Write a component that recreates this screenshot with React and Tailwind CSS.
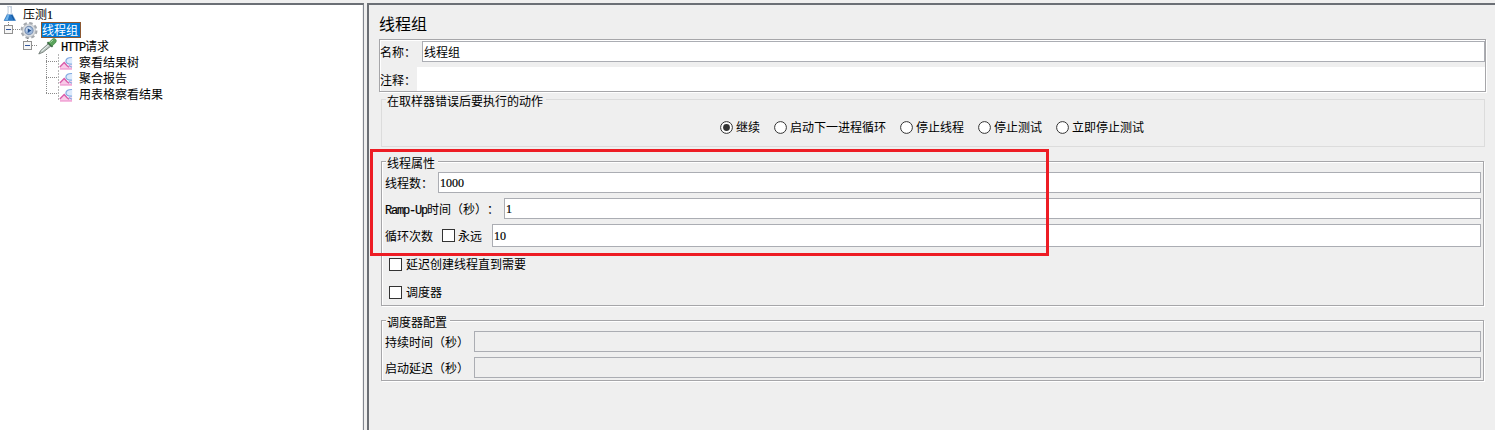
import React from "react";

const etched =
  "border border-[#a6a6a9] shadow-[1px_1px_0_#fff,inset_1px_1px_0_#fff]";

function Mono({ children }) {
  return (
    <span className="font-['Liberation_Mono',monospace] text-[12px] leading-none tracking-[-1.2px] [-webkit-text-stroke:0.2px]">
      {children}
    </span>
  );
}

function Digits({ children }) {
  return (
    <span className="font-['Liberation_Serif',serif] text-[12px] leading-none [-webkit-text-stroke:0.2px]">
      {children}
    </span>
  );
}

function Flask() {
  return (
    <svg width="14" height="16" viewBox="0 0 14 16" className="shrink-0">
      <path d="M4 .6h5M5 1v5.5L1 14.5h11.6L8.5 6.5V1z" fill="#e6edf5" stroke="#c3cedb" strokeWidth=".9" />
      <path d="M4 8.4h5.4l3.4 6.4H.8z" fill="#2b78c5" />
      <path d="M4.4 9h2L4.8 14H2z" fill="#70b3e8" />
      <path d="M8.6 9l2.4 5" stroke="#12539b" />
      <path d="M6.5 1v7" stroke="#fff" />
    </svg>
  );
}

function Gear() {
  return (
    <svg width="18" height="17" viewBox="0 0 18 17" className="shrink-0">
      <circle cx="9" cy="8.5" r="7.3" fill="none" stroke="#a4a8ad" strokeWidth="2.4" strokeDasharray="3.4 2.33" />
      <circle cx="9" cy="8.5" r="6.5" fill="#dcdfe2" stroke="#b5b9be" strokeWidth=".7" />
      <circle cx="9" cy="8.5" r="4.1" fill="#9db9de" stroke="#7d94b5" strokeWidth="1.1" />
      <circle cx="8.4" cy="7.6" r="2.4" fill="#d3e2f5" />
      <path d="M7.7 6.2l3.6 2.4-3.6 2.4z" fill="#1d4c8e" />
    </svg>
  );
}

function Pipette() {
  return (
    <svg width="19" height="17" viewBox="0 0 19 17" className="shrink-0">
      <path d="M.8 16L2.6 12.6l7.7-6.9 2.5 2.4-7.6 6z" fill="#b9c5bf" stroke="#6f7974" strokeWidth=".9" />
      <path d="M3.4 13.2L10.7 7" stroke="#eef6f3" />
      <path d="M9.4 4.2l5.2 4.6" stroke="#3b6a42" strokeWidth="2" />
      <path d="M10.8 4.9L14 1.4q2-1.6 3.8 0 1.2 1.6-.4 3.5L14 8z" fill="#5ba45c" stroke="#438746" strokeWidth=".7" />
      <path d="M12.5 4.4l2.7-2.6" stroke="#a9dcaa" />
    </svg>
  );
}

function Graph() {
  return (
    <svg width="14" height="14" viewBox="0 0 14 14" className="mt-[2px] shrink-0">
      <path d="M1 11L5 6.500l3 3.500 5-1v5H1z" fill="#f9cbe8" />
      <path d="M.8 10.900L5.200 6.500l2.900 3.200 1.900 1.500" fill="none" stroke="#d95aa9" strokeWidth="1.400" />
      <path d="M1 12.800h12" stroke="#ee9bd0" />
      <path d="M13.200 1v8C8.500 9 6.500 7.500 6.800 4.800 7.200 2 9.500 1 13.200 1z" fill="#dceafc" />
      <path d="M13 1.500C9.500 1.300 7 2.700 6.900 5c0 2.200 2.400 3.400 6 3.200" fill="none" stroke="#83a9e0" strokeWidth="1.200" />
      <path d="M9.800 9.500l3.200 1.700" stroke="#86a8de" strokeWidth="1.100" />
    </svg>
  );
}

const dots = { stroke: "#8a8a8a", strokeDasharray: "1 1", fill: "none" };

function Expander({ x, y }) {
  return (
    <g>
      <rect x={x + 0.5} y={y + 0.5} width="8" height="8" fill="#f6f6f6" stroke="#919191" />
      <path d={`M${x + 2} ${y + 4.5}h5`} stroke="#31569d" />
    </g>
  );
}

function LeafLines({ last }) {
  return (
    <svg width="59" height="16" className="shrink-0">
      <path d={last ? "M46.5 0v8" : "M46.5 0v16"} {...dots} />
      <path d="M46 7.5h11" {...dots} />
      <path d="M58.5 0v15" stroke="#b5b5b5" strokeDasharray="2 1" />
    </svg>
  );
}

function Tree() {
  return (
    <div className="h-full w-[362px] bg-white pt-px">
      <div className="flex h-4 items-center pl-[3px]">
        <Flask />
        <span className="ml-[6px]">压测<Digits>1</Digits></span>
      </div>
      <div className="flex h-4 items-center">
        <svg width="20" height="16" className="shrink-0">
          <path d="M8.5 0v3M13 7.5h7" {...dots} />
          <Expander x={4} y={3} />
        </svg>
        <Gear />
        <span className="relative ml-[3px] flex h-4 w-[40px] items-center bg-[#0078d7] pl-px text-white">
          线程组
          <svg width="40" height="16" className="absolute left-0 top-0">
            <rect x=".5" y=".5" width="39" height="15" fill="none" stroke="#1c2a3a" />
            <rect x=".5" y=".5" width="39" height="15" fill="none" stroke="#ff8728" strokeDasharray="1 1" />
          </svg>
        </span>
      </div>
      <div className="flex h-4 items-center">
        <svg width="38" height="16" className="shrink-0">
          <path d="M27.5 0v3M32 7.5h6" {...dots} />
          <Expander x={23} y={3} />
        </svg>
        <Pipette />
        <span className="ml-[4px]"><Mono>HTTP</Mono>请求</span>
      </div>
      {["察看结果树", "聚合报告", "用表格察看结果"].map((name, i) => (
        <div key={name} className="flex h-4 items-center">
          <LeafLines last={i === 2} />
          <Graph />
          <span className="ml-[6px]">{name}</span>
        </div>
      ))}
    </div>
  );
}

function Field({ children, disabled, tall }) {
  return (
    <div
      className={`flex flex-1 items-center border border-[#abadb3] pl-px ${tall ? "h-[23px]" : "h-[21px]"} ${disabled ? "bg-[#efefef]" : "bg-white"}`}
    >
      {children}
    </div>
  );
}

function Check() {
  return <span className="h-[13px] w-[13px] shrink-0 border border-[#333] bg-white" />;
}

function Caption({ children }) {
  return (
    <div className="absolute -top-[7px] left-[4px] h-4 bg-[#efefef] pl-px pr-[3px] leading-4">
      {children}
    </div>
  );
}

function Radio({ label, checked }) {
  return (
    <div className="flex items-center gap-[3px]">
      <svg width="13" height="13" className="shrink-0">
        <circle cx="6.5" cy="6.5" r="5.9" fill="#fff" stroke="#333" strokeWidth="1" />
        {checked && <circle cx="6.5" cy="6.5" r="3.4" fill="#333" />}
      </svg>
      <span className="-mt-px">{label}</span>
    </div>
  );
}

export default function App() {
  return (
    <div className="relative flex h-[430px] w-[1495px] flex-col overflow-hidden whitespace-nowrap bg-[#efefef] pt-[3px] font-['Noto_Sans_CJK_SC',sans-serif] text-[12px] leading-4 text-black [text-spacing-trim:space-all]">
      <div className="flex min-h-0 flex-1">
        <div className="w-[364px] border-r border-t-2 border-r-[#828790] border-t-[#6b6f75]">
          <Tree />
        </div>
        <main className="ml-[3px] flex flex-1 flex-col border-l-2 border-t-2 border-[#6b6f75] pl-[10px]">
          <h1 className="mt-[7px] h-[27px] text-[16px] leading-[22px]">线程组</h1>

          <div className={`flex h-[53px] w-[1107px] flex-col gap-[5px] pt-px ${etched}`}>
            <div className="flex h-[21px] items-center">
              <span className="w-[42px]">名称：</span>
              <Field>线程组</Field>
            </div>
            <div className="flex h-[24px] items-center">
              <span className="w-[37px] pt-px">注释：</span>
              <div className="h-full flex-1 bg-white" />
            </div>
          </div>

          <section className="relative ml-[2px] mt-[7px] flex h-[48px] w-[1104px] justify-center border border-[#dcdcdc] pt-[20px]">
            <Caption>在取样器错误后要执行的动作</Caption>
            <div className="mr-[2px] flex h-[15px] items-center gap-[14px]">
              <Radio label="继续" checked />
              <Radio label="启动下一进程循环" />
              <Radio label="停止线程" />
              <Radio label="停止测试" />
              <Radio label="立即停止测试" />
            </div>
          </section>

          <section className={`relative ml-[2px] mt-[14px] flex h-[145px] w-[1103px] flex-col pl-[3px] pr-[2px] pt-[10px] ${etched}`}>
            <Caption>线程属性</Caption>
            <div className="flex items-center">
              <span className="w-[53px]">线程数：</span>
              <Field><Digits>1000</Digits></Field>
            </div>
            <div className="mt-[5px] flex items-center">
              <span className="w-[119px]"><Mono>Ramp-Up</Mono>时间（秒）：</span>
              <Field><Digits>1</Digits></Field>
            </div>
            <div className="mt-[5px] flex items-center">
              <span className="w-[57px]">循环次数</span>
              <Check />
              <span className="ml-[3px] w-[34px]">永远</span>
              <Field tall><Digits>10</Digits></Field>
            </div>
            <div className="ml-[4px] mt-[9px] flex h-4 items-center gap-[4px]">
              <Check />
              延迟创建线程直到需要
            </div>
            <div className="ml-[4px] mt-[12px] flex h-4 items-center gap-[4px]">
              <Check />
              调度器
            </div>
          </section>

          <section className={`relative ml-[2px] mt-[14px] flex h-[61px] w-[1103px] flex-col gap-[5px] pl-[3px] pr-[2px] pt-[10px] ${etched}`}>
            <Caption>调度器配置</Caption>
            <div className="flex items-center">
              <span className="w-[89px]">持续时间（秒）</span>
              <Field disabled />
            </div>
            <div className="flex items-center">
              <span className="w-[89px]">启动延迟（秒）</span>
              <Field disabled />
            </div>
          </section>
        </main>
      </div>
      <div className="absolute left-[370px] top-[149px] h-[107px] w-[679px] border-[3px] border-[#ed1c24]" />
    </div>
  );
}
